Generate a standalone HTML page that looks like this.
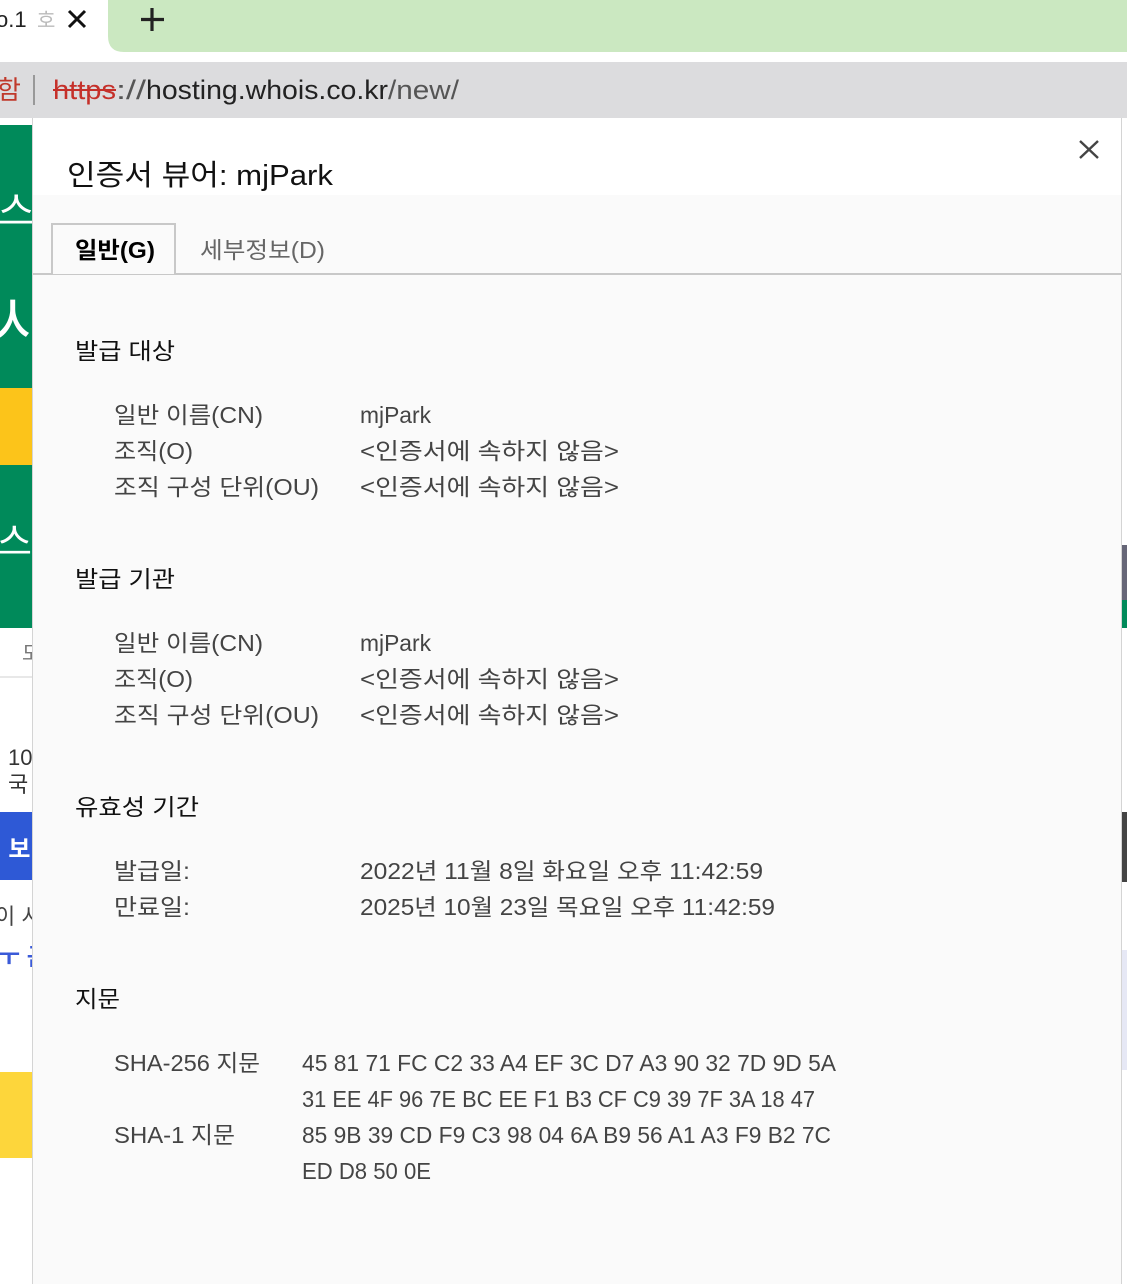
<!DOCTYPE html>
<html><head><meta charset="utf-8"><style>
html,body{margin:0;padding:0;width:1127px;height:1284px;overflow:hidden;background:#fff}
svg{display:block}
text{font-family:"Liberation Sans","Noto Sans CJK KR",sans-serif}
</style></head><body>
<svg width="1127" height="1284" viewBox="0 0 1127 1284" xmlns="http://www.w3.org/2000/svg">
<!-- tab strip -->
<rect x="0" y="0" width="1127" height="62" fill="#fff"/>
<path d="M108 0 H1127 V52 H124 Q108 52 108 36 Z" fill="#cbe8c1"/>
<text x="-4" y="27" font-size="22" fill="#222">o.1</text>
<text x="37" y="27" font-size="20" fill="#bbb">호</text>
<path d="M69 11 L85 27 M85 11 L69 27" stroke="#111" stroke-width="3"/>
<path d="M152 8 V31 M141 19.5 H164" stroke="#222" stroke-width="3.2"/>
<!-- address bar -->
<rect x="0" y="62" width="1127" height="56" fill="#dcdcde"/>
<text x="-3" y="99" font-size="26" fill="#c0392b">함</text>
<rect x="33" y="75" width="2" height="30" fill="#999"/>
<text x="53" y="99" font-size="27" fill="#c5302a" textLength="63" lengthAdjust="spacingAndGlyphs">https</text>
<rect x="53" y="89" width="63" height="2" fill="#c5302a"/>
<text x="116" y="99" font-size="27" fill="#555" textLength="30" lengthAdjust="spacingAndGlyphs">://</text>
<text x="146" y="99" font-size="27" fill="#222" textLength="242" lengthAdjust="spacingAndGlyphs">hosting.whois.co.kr</text>
<text x="388" y="99" font-size="27" fill="#555" textLength="71" lengthAdjust="spacingAndGlyphs">/new/</text>
<!-- left background page -->
<rect x="0" y="118" width="33" height="1166" fill="#fff"/>
<rect x="0" y="125" width="33" height="503" fill="#008a5a"/>
<rect x="0" y="388" width="33" height="77" fill="#fcc41a"/>
<text x="-2" y="225" font-size="40" fill="#fff">스</text>
<text x="-6" y="345" font-size="60" fill="#fff">사</text>
<text x="-3" y="555" font-size="38" fill="#fff">스</text>
<text x="22" y="660" font-size="20" fill="#777">도</text>
<rect x="0" y="676" width="33" height="2" fill="#e8e8e8"/>
<text x="8" y="765" font-size="22" fill="#333">10</text>
<text x="8" y="792" font-size="22" fill="#333">국</text>
<rect x="0" y="812" width="33" height="68" fill="#2e59d6"/>
<text x="-5" y="857" font-size="24" fill="#fff" font-weight="bold">. 보</text>
<text x="-5" y="924" font-size="22" fill="#444">이 시</text>
<text x="-2" y="965" font-size="24" fill="#3a5ad8" font-weight="bold">ㅜ 근</text>
<rect x="0" y="1072" width="33" height="86" fill="#fdd63b"/>
<!-- right background -->
<rect x="1121" y="118" width="6" height="1166" fill="#fff"/>
<rect x="1121" y="545" width="6" height="55" fill="#667"/>
<rect x="1121" y="600" width="6" height="28" fill="#008a5a"/>
<rect x="1121" y="812" width="6" height="70" fill="#444"/>
<rect x="1121" y="950" width="6" height="120" fill="#e6e8f5"/>
<!-- dialog -->
<rect x="33" y="118" width="1088" height="1166" fill="#fafafa"/>
<rect x="33" y="118" width="1088" height="77" fill="#fff"/>
<rect x="32" y="118" width="1" height="1166" fill="#d4d4d4"/>
<rect x="1121" y="118" width="1" height="1166" fill="#d4d4d4"/>
<path d="M1080 141 L1098 158 M1098 141 L1080 158" stroke="#444" stroke-width="2.4"/>
<text x="67" y="185" font-size="29" fill="#111" textLength="266" lengthAdjust="spacingAndGlyphs">인증서 뷰어: mjPark</text>
<!-- tabs -->
<rect x="33" y="273" width="1088" height="2" fill="#c8c8c8"/>
<path d="M52 274 V224 H175 V274" fill="#fafafa" stroke="#c8c8c8" stroke-width="2"/>
<text x="75" y="258" font-size="23" font-weight="bold" fill="#000" textLength="80" lengthAdjust="spacingAndGlyphs">일반(G)</text>
<text x="200" y="258" font-size="23" fill="#666" textLength="125" lengthAdjust="spacingAndGlyphs">세부정보(D)</text>
<g font-size="23">
<text x="75" y="359" fill="#111" textLength="100" lengthAdjust="spacingAndGlyphs">발급 대상</text>
<g fill="#444">
<text x="114" y="423" textLength="149" lengthAdjust="spacingAndGlyphs">일반 이름(CN)</text>
<text x="114" y="459" textLength="79" lengthAdjust="spacingAndGlyphs">조직(O)</text>
<text x="114" y="495" textLength="205" lengthAdjust="spacingAndGlyphs">조직 구성 단위(OU)</text>
<text x="360" y="423" textLength="71" lengthAdjust="spacingAndGlyphs">mjPark</text>
<text x="360" y="459" textLength="259" lengthAdjust="spacingAndGlyphs">&lt;인증서에 속하지 않음&gt;</text>
<text x="360" y="495" textLength="259" lengthAdjust="spacingAndGlyphs">&lt;인증서에 속하지 않음&gt;</text>
</g>
<text x="75" y="587" fill="#111" textLength="100" lengthAdjust="spacingAndGlyphs">발급 기관</text>
<g fill="#444">
<text x="114" y="651" textLength="149" lengthAdjust="spacingAndGlyphs">일반 이름(CN)</text>
<text x="114" y="687" textLength="79" lengthAdjust="spacingAndGlyphs">조직(O)</text>
<text x="114" y="723" textLength="205" lengthAdjust="spacingAndGlyphs">조직 구성 단위(OU)</text>
<text x="360" y="651" textLength="71" lengthAdjust="spacingAndGlyphs">mjPark</text>
<text x="360" y="687" textLength="259" lengthAdjust="spacingAndGlyphs">&lt;인증서에 속하지 않음&gt;</text>
<text x="360" y="723" textLength="259" lengthAdjust="spacingAndGlyphs">&lt;인증서에 속하지 않음&gt;</text>
</g>
<text x="75" y="815" fill="#111" textLength="124" lengthAdjust="spacingAndGlyphs">유효성 기간</text>
<g fill="#444">
<text x="114" y="879" textLength="76" lengthAdjust="spacingAndGlyphs">발급일:</text>
<text x="114" y="915" textLength="76" lengthAdjust="spacingAndGlyphs">만료일:</text>
<text x="360" y="879" textLength="403" lengthAdjust="spacingAndGlyphs">2022년 11월 8일 화요일 오후 11:42:59</text>
<text x="360" y="915" textLength="415" lengthAdjust="spacingAndGlyphs">2025년 10월 23일 목요일 오후 11:42:59</text>
</g>
<text x="75" y="1007" fill="#111" textLength="45" lengthAdjust="spacingAndGlyphs">지문</text>
<g fill="#444">
<text x="114" y="1071" textLength="146" lengthAdjust="spacingAndGlyphs">SHA-256 지문</text>
<text x="114" y="1143" textLength="121" lengthAdjust="spacingAndGlyphs">SHA-1 지문</text>
<text x="302" y="1071" textLength="534" lengthAdjust="spacingAndGlyphs">45 81 71 FC C2 33 A4 EF 3C D7 A3 90 32 7D 9D 5A</text>
<text x="302" y="1107" textLength="513" lengthAdjust="spacingAndGlyphs">31 EE 4F 96 7E BC EE F1 B3 CF C9 39 7F 3A 18 47</text>
<text x="302" y="1143" textLength="529" lengthAdjust="spacingAndGlyphs">85 9B 39 CD F9 C3 98 04 6A B9 56 A1 A3 F9 B2 7C</text>
<text x="302" y="1179" textLength="129" lengthAdjust="spacingAndGlyphs">ED D8 50 0E</text>
</g>
</g>
</svg>
</body></html>
